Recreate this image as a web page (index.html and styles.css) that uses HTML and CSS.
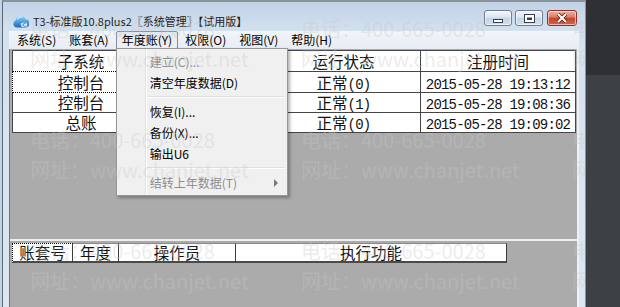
FILE: index.html
```html
<!DOCTYPE html>
<html lang="zh-CN">
<head>
    <meta charset="UTF-8">
    <title>系统管理 - T3 标准版</title>
    <link rel="stylesheet" href="styles.css">
</head>
<body>
    <div class="window">
        <div class="titlebar">
            <svg class="app-icon" width="16" height="16" viewBox="0 0 16 16">
                <defs>
                    <linearGradient id="cloud" x1="0" y1="0" x2="0" y2="1">
                        <stop offset="0" stop-color="#8fd0fa"/>
                        <stop offset="1" stop-color="#1a68bd"/>
                    </linearGradient>
                </defs>
                <path d="M4 14.5 A3.6 3.6 0 0 1 2.6 7.6 A5.2 5.2 0 0 1 12.6 6.2 A4 4 0 0 1 12.4 14.5 Z" fill="url(#cloud)"/>
                <path d="M4.5 6.5 A3.5 3.5 0 0 1 9.5 4.2" stroke="#d8f0ff" stroke-width="1.2" fill="none"/>
                <ellipse cx="11" cy="11.8" rx="3.2" ry="2.4" fill="#dfe8f1"/>
                <path d="M12.4 10.6 A1.6 1.4 0 1 0 12.4 13" stroke="#3a6fa8" stroke-width="1" fill="none"/>
            </svg>
            <span class="title">T3-标准版10.8plus2〖系统管理〗【试用版】</span>
            <div class="caption-buttons">
                <span class="cap-btn cap-min">
                    <svg width="10" height="4"><rect x="0.5" y="0.5" width="9" height="3" fill="#fff" stroke="#34404f"/></svg>
                </span>
                <span class="cap-btn cap-max">
                    <svg width="11" height="9"><rect x="0" y="0" width="11" height="9" fill="#34404f"/><rect x="1" y="1" width="9" height="7" fill="#fff"/><rect x="3" y="3.5" width="5" height="2.5" fill="#34404f"/></svg>
                </span>
                <span class="cap-btn cap-close">
                    <svg width="12" height="10"><path d="M2 1 L10 9 M10 1 L2 9" stroke="#6b2216" stroke-width="3.8"/><path d="M2 1 L10 9 M10 1 L2 9" stroke="#fff" stroke-width="2"/></svg>
                </span>
            </div>
        </div>

        <ul class="menubar">
            <li>系统(S)</li>
            <li>账套(A)</li>
            <li class="open">年度账(Y)
                <div class="dropdown">
                    <div class="dd-item disabled">建立(C)...</div>
                    <div class="dd-item">清空年度数据(D)</div>
                    <div class="dd-sep"></div>
                    <div class="dd-item">恢复(I)...</div>
                    <div class="dd-item">备份(X)...</div>
                    <div class="dd-item">输出U6</div>
                    <div class="dd-sep"></div>
                    <div class="dd-item disabled has-sub">结转上年数据(T)<i class="sub-arrow"></i></div>
                </div>
            </li>
            <li>权限(O)</li>
            <li>视图(V)</li>
            <li>帮助(H)</li>
        </ul>

        <div class="client">
            <div class="pane-top">
                <table class="grid">
                    <colgroup>
                        <col style="width: 138px">
                        <col style="width: 117px">
                        <col style="width: 154px">
                        <col style="width: 155px">
                    </colgroup>
                    <thead>
                        <tr>
                            <th class="focus-top">子系统</th>
                            <th>站点</th>
                            <th>运行状态</th>
                            <th>注册时间</th>
                        </tr>
                    </thead>
                    <tbody>
                        <tr>
                            <td class="focus">控制台</td>
                            <td></td>
                            <td>正常<span class="num">(0)</span></td>
                            <td><span class="num">2015-05-28 19:13:12</span></td>
                        </tr>
                        <tr>
                            <td>控制台</td>
                            <td></td>
                            <td>正常<span class="num">(1)</span></td>
                            <td><span class="num">2015-05-28 19:08:36</span></td>
                        </tr>
                        <tr>
                            <td>总账</td>
                            <td></td>
                            <td>正常<span class="num">(0)</span></td>
                            <td><span class="num">2015-05-28 19:09:02</span></td>
                        </tr>
                    </tbody>
                </table>
            </div>
            <div class="splitter"></div>
            <div class="pane-bottom">
                <table class="log-head">
                    <colgroup>
                        <col style="width: 61px">
                        <col style="width: 46px">
                        <col style="width: 117px">
                        <col style="width: 271px">
                    </colgroup>
                    <tr>
                        <th class="focus">账套号</th>
                        <th>年度</th>
                        <th>操作员</th>
                        <th>执行功能</th>
                    </tr>
                </table>
            </div>
        </div>

        <!-- watermark over the whole window -->
        <div class="watermark">
            <div><p>电话：400-665-0028</p><p>网址：www.chanjet.net</p></div>
            <div><p>电话：400-665-0028</p><p>网址：www.chanjet.net</p></div>
            <div><p>电话：400-665-0028</p><p>网址：www.chanjet.net</p></div>
            <div><p>电话：400-665-0028</p><p>网址：www.chanjet.net</p></div>
            <div><p>电话：400-665-0028</p><p>网址：www.chanjet.net</p></div>
            <div><p>电话：400-665-0028</p><p>网址：www.chanjet.net</p></div>
            <div><p>电话：400-665-0028</p><p>网址：www.chanjet.net</p></div>
            <div><p>电话：400-665-0028</p><p>网址：www.chanjet.net</p></div>
            <div><p>电话：400-665-0028</p><p>网址：www.chanjet.net</p></div>
        </div>
    </div>
</body>
</html>
```

FILE: styles.css
```css
body {
    margin: 0;
    height: 307px;
    overflow: hidden;
    font-family: "Noto Sans CJK SC", sans-serif;
    background:
        linear-gradient(to right, #c0d3e8 0 2px, transparent 2px),
        linear-gradient(#2f3033 0 75px, #3d4044 75px);
}

.window {
    position: relative;
    box-sizing: border-box;
    width: 584px;
    height: 307px;
    margin-left: 2px;
    padding: 0 6px;
    border-top: 2px solid #8a929c;
    border-left: 1px solid #5f6770;
    border-right: 1px solid #4aa6de;
    background: linear-gradient(#c1d2e5, #d4e1ef 30px, #dce7f3);
    display: flex;
    flex-direction: column;
    overflow: hidden;
}

/* title bar */
.titlebar {
    height: 29px;
    padding: 0 2px 0 4px;
    display: flex;
    align-items: flex-start;
    flex-shrink: 0;
}

.app-icon {
    margin-top: 11px;
    margin-right: 4px;
}

.title {
    margin-top: 11px;
    font-size: 11px;
    line-height: 16px;
    color: #1b1b1b;
    white-space: nowrap;
}

.caption-buttons {
    margin-left: auto;
    margin-top: 8px;
    display: flex;
}

.cap-btn {
    box-sizing: border-box;
    width: 28px;
    height: 16px;
    border: 1px solid #6f7e93;
    border-radius: 3px;
    background: linear-gradient(#f1f6fb 0%, #dbe6f2 45%, #c3d3e6 50%, #d2e0ef 100%);
    box-shadow: inset 0 0 0 1px rgba(255, 255, 255, 0.55);
    display: flex;
    align-items: center;
    justify-content: center;
}

.cap-min {
    align-items: flex-end;
    padding-bottom: 2px;
}

.cap-max {
    margin-left: 3px;
}

.cap-close {
    width: 30px;
    margin-left: 4px;
    border-color: #8a3326;
    background: linear-gradient(#eeb2a3 0%, #dc7a64 45%, #c4432b 50%, #d4654c 100%);
}

/* menu bar */
.menubar {
    list-style: none;
    margin: 0;
    padding: 0 0 0 2px;
    height: 18px;
    display: flex;
    flex-shrink: 0;
    background: linear-gradient(#f2f5f9, #e6ecf3);
    font-size: 12px;
    color: #000;
}

.menubar li {
    position: relative;
    padding: 0 6px;
    margin-right: 1px;
    line-height: 17px;
    white-space: nowrap;
}

.menubar li.open {
    padding: 0 5px;
    line-height: 15px;
    border: 1px solid #878d95;
    border-radius: 2px;
    background: linear-gradient(#e2e7ed, #eef2f6);
}

.dropdown {
    position: absolute;
    left: -1px;
    top: 16px;
    z-index: 3;
    box-sizing: border-box;
    width: 172px;
    padding: 2px;
    border: 1px solid #979797;
    background:
        linear-gradient(to right, transparent 28px, #e2e3e3 28px 29px, #fff 29px 30px, transparent 30px),
        #f0f0f0;
    box-shadow: 2px 2px 3px rgba(0, 0, 0, 0.3);
}

.dd-item {
    height: 21px;
    line-height: 21px;
    padding-left: 31px;
    color: #000;
}

.dd-item.disabled {
    color: #8d8d8d;
}

.dd-item.has-sub {
    display: flex;
    align-items: center;
    justify-content: space-between;
    padding-right: 7px;
}

.sub-arrow {
    width: 0;
    height: 0;
    border-left: 4px solid #7a7a7a;
    border-top: 4px solid transparent;
    border-bottom: 4px solid transparent;
}

.dd-sep {
    height: 8px;
    margin-left: 28px;
    background: linear-gradient(transparent 3px, #e0e0e0 3px 4px, #fff 4px 5px, transparent 5px);
}

/* client area */
.client {
    flex: 1;
    background: #ababab;
    border-left: 1px solid #6d747c;
    border-right: 2px solid #eef2f7;
    display: flex;
    flex-direction: column;
}

.pane-top {
    box-sizing: border-box;
    height: 190px;
    padding: 1px 0 0 2px;
}

.splitter {
    height: 2px;
    background: #efefef;
}

.pane-bottom {
    padding: 2px 0 0 2px;
}

.grid,
.log-head {
    border-collapse: separate;
    border-spacing: 0;
    table-layout: fixed;
}

.grid {
    width: 564px;
}

.log-head {
    width: 495px;
}

.grid th,
.grid td {
    height: 20px;
    padding: 0;
    background: #fff;
    border-right: 1px solid #454545;
    border-bottom: 1px solid #454545;
    text-align: center;
    font-size: 15.5px;
    font-weight: 400;
    line-height: 20px;
    color: #111;
    white-space: nowrap;
}

.grid tbody tr:nth-child(n+2) td {
    height: 19px;
    line-height: 19px;
}

.grid tr > :first-child {
    border-left: 1px solid #454545;
}

.grid thead th {
    border-top: 1px solid #454545;
}

.grid th.focus-top {
    border-bottom: 1px dotted #000;
}

.grid td.focus {
    border-left: 1px dotted #000;
    border-bottom: 1px dotted #000;
}

.num {
    font-family: "Liberation Mono", monospace;
    font-size: 14px;
    line-height: 0;
    letter-spacing: -0.8px;
}

.log-head th {
    height: 17px;
    padding: 0;
    background: #fff;
    border-top: 1px solid #8a8a8a;
    border-right: 1px solid #3c3c3c;
    border-bottom: 2px solid #4a4a4a;
    text-align: center;
    font-size: 15.5px;
    font-weight: 400;
    line-height: 17px;
    color: #111;
    white-space: nowrap;
}

.log-head th.focus {
    border-top: 1px dotted #000;
    border-left: 1px dotted #000;
}

/* watermark */
.watermark {
    position: absolute;
    left: 27px;
    top: 12px;
    z-index: 5;
    display: grid;
    grid-template-columns: repeat(3, 271px);
    grid-auto-rows: 111px;
    font-size: 20px;
    line-height: 30px;
    color: rgba(200, 200, 200, 0.35);
    white-space: nowrap;
    pointer-events: none;
}

.watermark p {
    margin: 0;
}
```
